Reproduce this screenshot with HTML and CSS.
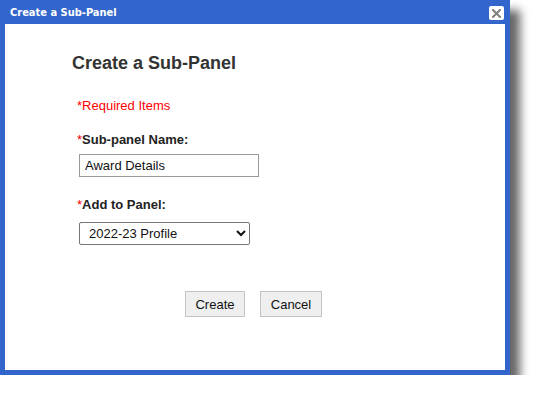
FILE: index.html
```html
<!DOCTYPE html>
<html lang="en">
  <head>
    <meta charset="utf-8" />
    <title>Create a Sub-Panel</title>
    <link rel="stylesheet" href="styles.css">
  </head>
  <body>
    <div class="dialog">
      <div class="titlebar">
        <span class="title">Create a Sub-Panel</span>
        <button class="close" aria-label="Close">
          <svg width="9" height="9" viewBox="0 0 9 9">
            <path d="M1 1L8 8M8 1L1 8" stroke="#808080" stroke-width="2" stroke-linecap="square" />
          </svg>
        </button>
      </div>
      <div class="content">
        <h1>Create a Sub-Panel</h1>
        <p class="required"><span class="star">*</span>Required Items</p>
        <div class="field">
          <label><span class="star">*</span>Sub-panel Name:</label>
          <input type="text" class="text-input" value="Award Details">
        </div>
        <div class="field field-select">
          <label><span class="star">*</span>Add to Panel:</label>
          <select class="select">
            <option>2022-23 Profile</option>
          </select>
        </div>
        <div class="actions">
          <button class="btn btn-create">Create</button>
          <button class="btn btn-cancel">Cancel</button>
        </div>
      </div>
    </div>
  </body>
</html>
```

FILE: styles.css
```css
body {
  margin: 0;
  background: #fff;
  font-family: Arial, "Liberation Sans", sans-serif;
}
.dialog {
  width: 500px;
  height: 370px;
  border: 5px solid #3366cc;
  border-top: 0;
  background: #fff;
  box-shadow: 10px 10px 9px rgba(0, 0, 0, 0.6);
}
.titlebar {
  height: 24px;
  margin: 0 -5px;
  padding: 0 6px 0 10px;
  background: #3366cc;
  display: flex;
  align-items: center;
  justify-content: space-between;
}
.title {
  color: #fff;
  font-size: 11px;
  font-weight: bold;
  font-family: "DejaVu Sans Condensed", "DejaVu Sans", sans-serif;
}
.close {
  width: 15px;
  height: 14px;
  margin-top: 2px;
  padding: 0;
  border: none;
  border-radius: 2px;
  background: #fff;
  display: flex;
  align-items: center;
  justify-content: center;
}
.content {
  padding: 29px 0 0 67px;
}
h1 {
  margin: 0 0 25px;
  font-size: 18px;
  line-height: 20px;
  font-weight: bold;
  color: #333;
}
.required {
  margin: 0 0 19px 5px;
  font-size: 13px;
  line-height: 15px;
  color: #f00;
}
.star {
  color: #f00;
  font-weight: normal;
}
.field {
  margin-left: 5px;
  margin-bottom: 20px;
}
.field label {
  display: block;
  font-size: 13px;
  line-height: 15px;
  font-weight: bold;
  color: #222;
  margin-bottom: 7px;
}
.field-select label {
  margin-bottom: 10px;
}
.text-input {
  display: block;
  width: 180px;
  height: 23px;
  box-sizing: border-box;
  margin-left: 2px;
  padding: 0 5px;
  border: 1px solid #999;
  font-family: Arial, "Liberation Sans", sans-serif;
  font-size: 13px;
  color: #111;
}
.select {
  display: block;
  width: 171px;
  height: 23px;
  box-sizing: border-box;
  margin-left: 2px;
  padding-left: 5px;
  border: 1px solid #767676;
  border-radius: 2px;
  font-family: Arial, "Liberation Sans", sans-serif;
  font-size: 13px;
  color: #111;
  background: #fff;
}
.actions {
  display: flex;
  gap: 15px;
  padding-left: 113px;
  margin-top: 46px;
}
.btn {
  height: 26px;
  padding: 0;
  border: 1px solid #c4c4c4;
  background: #efefef;
  font-family: Arial, "Liberation Sans", sans-serif;
  font-size: 13px;
  color: #111;
}
.btn-create {
  width: 60px;
}
.btn-cancel {
  width: 62px;
}
```
